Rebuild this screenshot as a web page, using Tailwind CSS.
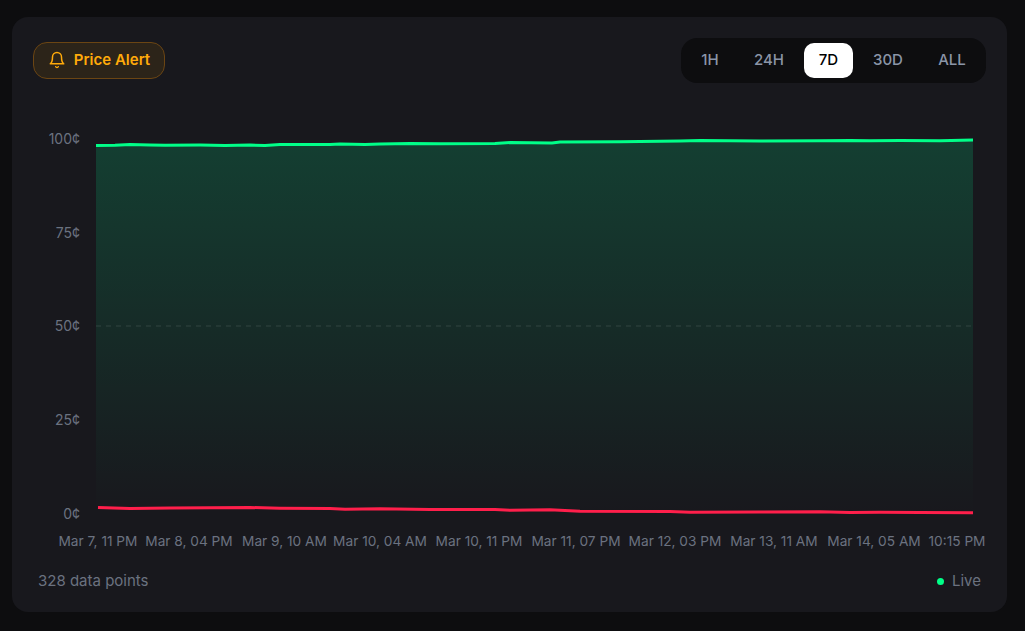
<!DOCTYPE html>
<html lang="en">
<head>
  <meta charset="UTF-8" />
  <meta name="viewport" content="width=device-width, initial-scale=1.0"/>
  <title>Price Chart</title>
  <script src="https://cdn.jsdelivr.net/npm/@tailwindcss/browser@4"></script>
</head>
<body class="bg-[#0d0d0f] font-['Inter',sans-serif] overflow-hidden">
  <div class="w-[1025px] h-[631px] pt-[17px] pl-[12px]">
    <div class="w-[995px] h-[595px] rounded-2xl bg-[#18181d] flex flex-col">
      <!-- Header -->
      <div class="flex justify-between pt-[21px] pl-[21px] pr-[21px] h-[83px] shrink-0">
        <button class="mt-[4px] w-[132px] h-[37px] flex items-center justify-center gap-[8px] pb-[1px] rounded-[14px] border border-[#6b4513] bg-[#2c2419] text-[#ffaa0a] text-[15px] font-semibold">
          <svg class="w-[18px] h-[18px]" viewBox="0 0 24 24" fill="none" stroke="currentColor" stroke-width="2" stroke-linecap="round" stroke-linejoin="round">
            <path d="M6 8a6 6 0 0 1 12 0c0 7 3 9 3 9H3s3-2 3-9"/>
            <path d="M10.3 21a1.94 1.94 0 0 0 3.4 0"/>
          </svg>
          Price Alert
        </button>
        <div class="w-[305px] h-[45px] flex items-center gap-1 p-[5px] rounded-2xl bg-[#0d0d0f] text-[15px] font-medium text-[#8b95a7]">
          <span class="w-[48px] h-[35px] flex items-center justify-center">1H</span>
          <span class="w-[62px] h-[35px] flex items-center justify-center">24H</span>
          <span class="w-[49px] h-[35px] flex items-center justify-center rounded-[10px] bg-white text-black">7D</span>
          <span class="w-[62px] h-[35px] flex items-center justify-center">30D</span>
          <span class="w-[58px] h-[35px] flex items-center justify-center">ALL</span>
        </div>
      </div>

      <!-- Chart -->
      <svg class="block shrink-0" width="995" height="460" viewBox="12 100 995 460" font-family="Inter, sans-serif" fill="#6b7280">
        <defs>
          <linearGradient id="area" x1="0" y1="0" x2="0" y2="1">
            <stop offset="0" stop-color="#00f090" stop-opacity="0.18"/>
            <stop offset="1" stop-color="#00f090" stop-opacity="0"/>
          </linearGradient>
        </defs>
        <path fill="url(#area)" d="M96 145.5 L973 140 L973 514 L96 514 Z"/>
        <line x1="96" x2="973" y1="326" y2="326" stroke="#ffffff" stroke-opacity="0.12" stroke-dasharray="5 5"/>
        <polyline fill="none" stroke="#00ff88" stroke-width="3" points="96,145.5 115,145.2 130,144.6 150,144.9 165,145.3 200,145.1 225,145.5 250,145 265,145.5 280,144.6 330,144.6 340,144 365,144.4 380,144.1 410,143.5 440,143.7 495,143.4 510,142.6 552,143 560,142 620,141.7 680,141 700,140.6 760,141 820,140.8 850,140.4 870,140.8 900,140.5 940,140.7 973,140"/>
        <polyline fill="none" stroke="#ff1f4b" stroke-width="3" points="98,507.5 130,508.4 170,507.9 250,507.5 280,508.2 330,508.4 345,509.2 380,508.8 430,509.4 495,509.5 510,510.3 550,509.8 580,511.2 670,511.4 690,512.2 760,511.9 820,511.8 850,512.6 880,512.2 920,512.5 973,512.8"/>
        <g text-anchor="end" font-size="14">
          <text x="80" y="144">100¢</text>
          <text x="80" y="238">75¢</text>
          <text x="80" y="331">50¢</text>
          <text x="80" y="425">25¢</text>
          <text x="80" y="519">0¢</text>
        </g>
        <g text-anchor="middle" font-size="13.7">
          <text x="98" y="546">Mar 7, 11 PM</text>
          <text x="189" y="546">Mar 8, 04 PM</text>
          <text x="284.5" y="546">Mar 9, 10 AM</text>
          <text x="380" y="546">Mar 10, 04 AM</text>
          <text x="479" y="546">Mar 10, 11 PM</text>
          <text x="576" y="546">Mar 11, 07 PM</text>
          <text x="675" y="546">Mar 12, 03 PM</text>
          <text x="774" y="546">Mar 13, 11 AM</text>
          <text x="874" y="546">Mar 14, 05 AM</text>
          <text x="957" y="546">10:15 PM</text>
        </g>
      </svg>

      <!-- Footer -->
      <div class="flex justify-between items-center px-[26px] h-[42px] text-[15px] text-[#6b7280]">
        <span>328 data points</span>
        <span class="flex items-center gap-2"><span class="w-[7px] h-[7px] rounded-full bg-[#00ff88]"></span>Live</span>
      </div>
    </div>
  </div>
</body>
</html>
